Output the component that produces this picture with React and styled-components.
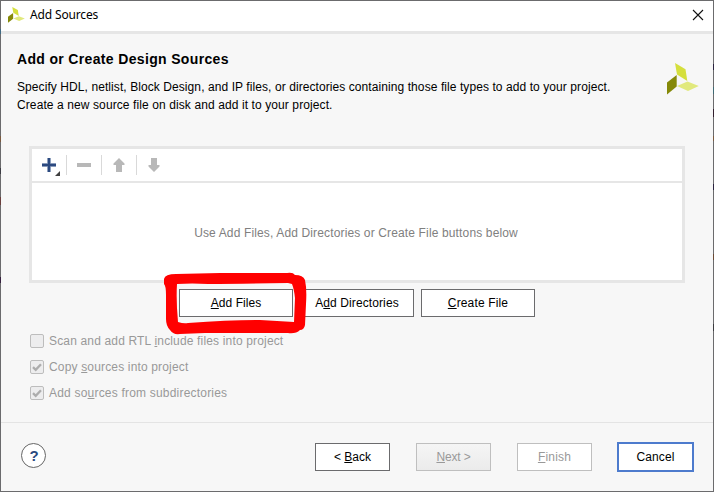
import React from "react";
import styled, { createGlobalStyle } from "styled-components";

const GlobalStyle = createGlobalStyle`
  *, *::before, *::after { box-sizing: border-box; }
  body { margin: 0; overflow: hidden; }
`;

const Dialog = styled.div`
  position: relative;
  display: flex;
  flex-direction: column;
  width: 714px;
  height: 492px;
  border: 1px solid #6b6b6d;
  background: #f7f7f7;
  color: #000;
  font: 12px/18px "Liberation Sans", Arial, sans-serif;
  white-space: nowrap;

  /* desktop colours showing through the window's translucent edges */
  &::before, &::after {
    content: "";
    position: absolute;
    top: -1px;
    bottom: -1px;
    width: 1px;
  }
  &::before {
    left: -1px;
    background: linear-gradient(transparent 29px, #3f6a84 29px 34px, transparent 34px 136px,
      #7a5a40 136px 142px, transparent 142px 168px, #3c3c44 168px 174px, transparent 174px 197px,
      #6b3f3d 197px 205px, transparent 205px 277px, #36203f 277px 283px, transparent 283px);
  }
  &::after {
    right: -1px;
    background: linear-gradient(transparent 64px, #2b2440 64px 70px, transparent 70px 87px,
      #3f6a74 87px 94px, transparent 94px 109px, #33202f 109px 117px, transparent 117px 136px,
      #7a5a40 136px 141px, transparent 141px 184px, #2b2440 184px 190px, transparent 190px 254px,
      #6b4a35 254px 260px, transparent 260px 324px, #3c3c40 324px 331px, transparent 331px);
  }
`;

const TitleBar = styled.header`
  display: flex;
  align-items: center;
  flex: 0 0 33px;
  padding: 0 9px 3px 7px;
  border-bottom: 3px solid #e6e6e6;
  background: #fff;
`;

const Title = styled.span`
  flex: 1;
  margin-left: 5px;
  padding-top: 1px;
  font: 12px/16px "Noto Sans", sans-serif;
  letter-spacing: -0.15px;
`;

const Intro = styled.section`
  display: flex;
  justify-content: space-between;
  height: 112px;
  padding: 16px 14px 0 16px;
`;

const Heading = styled.h1`
  margin: 0;
  font-size: 14px;
  line-height: 18px;
  letter-spacing: 0.34px;
`;

const Line = styled.p`
  margin: 0;
  letter-spacing: ${(p) => p.$track}px;
`;

const Copy = styled.div`
  display: flex;
  flex-direction: column;
  ${Heading} { margin-bottom: 10px; }
`;

const LogoSlot = styled.div`
  padding-top: 13px;
`;

const FileList = styled.section`
  display: flex;
  flex-direction: column;
  width: 656px;
  height: 137px;
  margin-left: 28px;
  border: 3px solid #e6e6e6;
  background: #fff;
`;

const Toolbar = styled.div`
  display: flex;
  align-items: center;
  flex: 0 0 34px;
  border-bottom: 2px solid #e6e6e6;
`;

const Tool = styled.div`
  display: flex;
  width: 35px;
  height: 20px;
  border-right: ${(p) => (p.$last ? "none" : "1px solid #d9d9d9")};
`;

const EmptyText = styled.div`
  display: flex;
  flex: 1;
  align-items: center;
  justify-content: center;
  padding: 2px 2px 0 0;
  color: #808080;
  letter-spacing: 0.14px;
`;

const Actions = styled.div`
  display: flex;
  gap: 7px;
  padding: 6px 0 0 178px;
`;

const Button = styled.button`
  width: ${(p) => p.$width || 114}px;
  height: ${(p) => p.$height || 28}px;
  padding: 0;
  border: 1px solid #6b6b6d;
  background: #fff;
  color: #000;
  font: inherit;
  letter-spacing: ${(p) => p.$track || 0}px;
  &:disabled { border-color: #bfbfbf; color: #999; }
`;

const NextButton = styled(Button)`
  background: linear-gradient(#f5f5f5, #ebebeb);
`;

const CancelButton = styled(Button)`
  border: 2px solid #4d7bcd;
`;

const Key = styled.span`
  text-decoration: underline;
  text-decoration-thickness: 1px;
  text-underline-offset: 1px;
  text-decoration-skip-ink: none;
`;

const Options = styled.div`
  display: flex;
  flex-direction: column;
  gap: 8px;
  padding: 15px 0 0 29px;
`;

const Option = styled.label`
  display: flex;
  align-items: center;
  gap: 5px;
  height: 18px;
  color: #999;
  letter-spacing: ${(p) => p.$track}px;
`;

const CheckBox = styled.span`
  display: flex;
  width: 14px;
  height: 14px;
  border: 1px solid #bdbdbd;
  border-radius: 2px;
  background: #ededee;
`;

const Footer = styled.footer`
  display: flex;
  align-items: center;
  height: 69px;
  margin-top: auto;
  padding: 0 19px 1px 20px;
  border-top: 1px solid #e4e4e4;
`;

const Help = styled.button`
  width: 25px;
  height: 25px;
  margin: 0 269px 2px 0;
  padding: 0 0 0 1px;
  border: 1px solid #666;
  border-radius: 50%;
  background: #fff;
  color: #2c4a80;
  font: bold 15px/23px "Liberation Sans", Arial, sans-serif;
`;

const Wizard = styled.div`
  display: flex;
  align-items: center;
  gap: 26px;
  ${CancelButton} { margin-left: -1px; }
`;

const Marker = styled.svg`
  position: absolute;
  left: 159px;
  top: 268px;
  pointer-events: none;
`;

const Logo = ({ width, height }) => (
  <svg width={width} height={height} viewBox="0 0 32 32" preserveAspectRatio="none">
    <path d="M8 0L18.5 6.2L20.3 18L10 11.5Z" fill="#d5df3d" />
    <path d="M0 19.5L9.7 12V23.5L0 31.5Z" fill="#858908" />
    <path d="M10 23L20.5 18.5L31.8 23L21 28Z" fill="#e1e97d" />
  </svg>
);

const Check = () => (
  <svg width="12" height="12">
    <path d="M2 6.2L4.7 8.8L10 3.2" fill="none" stroke="#adadad" strokeWidth="2.3" />
  </svg>
);

export default function App() {
  return (
    <>
      <GlobalStyle />
      <Dialog>
        <TitleBar>
          <Logo width={17} height={16} />
          <Title>Add Sources</Title>
          <svg width="12" height="12">
            <path d="M1 1L11 11M11 1L1 11" stroke="#111" strokeWidth="1.1" />
          </svg>
        </TitleBar>
        <Intro>
          <Copy>
            <Heading>Add or Create Design Sources</Heading>
            <Line $track={0.08}>Specify HDL, netlist, Block Design, and IP files, or directories containing those file types to add to your project.</Line>
            <Line $track={0.1}>Create a new source file on disk and add it to your project.</Line>
          </Copy>
          <LogoSlot><Logo width={32} height={32} /></LogoSlot>
        </Intro>
        <FileList>
          <Toolbar>
            <Tool>
              <svg width="34" height="24">
                <path d="M10 10H24M17 3V17" stroke="#a9b7ce" strokeWidth="4" />
                <path d="M10 10H24M17 3V17" stroke="#2c4a80" strokeWidth="2.4" />
                <path d="M28 16V21H23Z" fill="#404040" />
              </svg>
            </Tool>
            <Tool>
              <svg width="34" height="20"><path d="M10 8H24V12H10Z" fill="#b8b8b8" /></svg>
            </Tool>
            <Tool>
              <svg width="34" height="20"><path d="M17 3L22.5 8.5V10H20V17H14V10H11.5V8.5Z" fill="#b8b8b8" /></svg>
            </Tool>
            <Tool $last>
              <svg width="34" height="20"><path d="M17 17L22.5 11.5V10H20V3H14V10H11.5V11.5Z" fill="#b8b8b8" /></svg>
            </Tool>
          </Toolbar>
          <EmptyText>Use Add Files, Add Directories or Create File buttons below</EmptyText>
        </FileList>
        <Actions>
          <Button $track={0.05}><Key>A</Key>dd Files</Button>
          <Button $track={0.1}>A<Key>d</Key>d Directories</Button>
          <Button $track={0.15}><Key>C</Key>reate File</Button>
        </Actions>
        <Options>
          <Option $track={0.16}><CheckBox /><span>Scan and add RTL <Key>i</Key>nclude files into project</span></Option>
          <Option $track={0.16}><CheckBox><Check /></CheckBox><span>Copy <Key>s</Key>ources into project</span></Option>
          <Option $track={0.2}><CheckBox><Check /></CheckBox><span>Add so<Key>u</Key>rces from subdirectories</span></Option>
        </Options>
        <Footer>
          <Help>?</Help>
          <Wizard>
            <Button $width={75}>&lt; <Key>B</Key>ack</Button>
            <NextButton $width={75} $track={-0.15} disabled><Key>N</Key>ext &gt;</NextButton>
            <Button $width={75} $track={0.2} disabled><Key>F</Key>inish</Button>
            <CancelButton $width={77} $height={30} $track={0.1}>Cancel</CancelButton>
          </Wizard>
        </Footer>
        <Marker width="150" height="70">
          <path fillRule="evenodd" fill="#f00" d="M4 10Q5 5 16 5L60 4L127 4Q133 3 135 6Q143 6 145 11Q147 20 146 35L145 56Q144 61 140 61Q136 65 128 64L45 64L20 65Q13 66 10 61Q6 57 6 50L6 26Q6 17 4 15ZM17 15Q16 32 18 53Q24 55 28 54Q70 51 100 51L134 53L135 29Q134 20 132 15L128 14Q80 15 48 15Q32 14 17 15Z" />
        </Marker>
      </Dialog>
    </>
  );
}
